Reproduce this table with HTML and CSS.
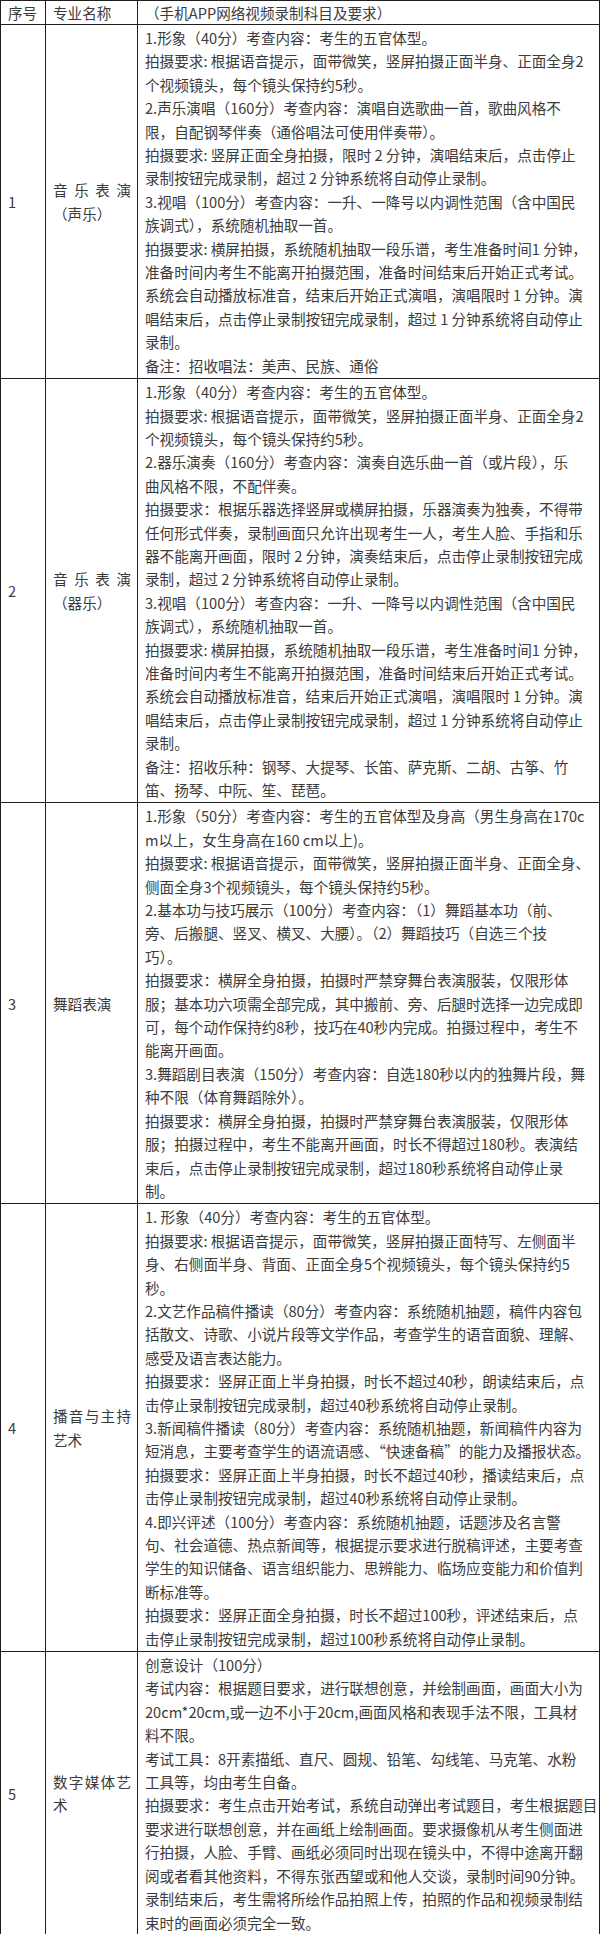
FILE: index.html
```html
<!DOCTYPE html>
<html lang="zh-CN">
<head>
<meta charset="utf-8">
<title>手机APP网络视频录制科目及要求</title>
<link rel="stylesheet" href="styles.css">
</head>
<body>
<table class="exam">
  <colgroup>
    <col class="c-no">
    <col class="c-major">
    <col class="c-req">
  </colgroup>
  <thead>
    <tr class="head">
      <th class="no">序号</th>
      <th class="major">专业名称</th>
      <th class="req">（手机APP网络视频录制科目及要求）</th>
    </tr>
  </thead>
  <tbody>
    <tr>
      <td class="no">1</td>
      <td class="major"><span class="jl">音乐表演</span>（声乐）</td>
      <td class="req"><div class="txt">1.形象（40分）考查内容：考生的五官体型。<br>拍摄要求: 根据语音提示，面带微笑，竖屏拍摄正面半身、正面全身2<br>个视频镜头，每个镜头保持约5秒。<br>2.声乐演唱（160分）考查内容：演唱自选歌曲一首，歌曲风格不<br>限，自配钢琴伴奏（通俗唱法可使用伴奏带）。<br>拍摄要求: 竖屏正面全身拍摄，限时 2 分钟，演唱结束后，点击停止<br>录制按钮完成录制，超过 2 分钟系统将自动停止录制。<br>3.视唱（100分）考查内容：一升、一降号以内调性范围（含中国民<br>族调式），系统随机抽取一首。<br>拍摄要求: 横屏拍摄，系统随机抽取一段乐谱，考生准备时间1 分钟，<br>准备时间内考生不能离开拍摄范围，准备时间结束后开始正式考试。<br>系统会自动播放标准音，结束后开始正式演唱，演唱限时 1 分钟。演<br>唱结束后，点击停止录制按钮完成录制，超过 1 分钟系统将自动停止<br>录制。<br>备注：招收唱法：美声、民族、通俗</div></td>
    </tr>
    <tr>
      <td class="no">2</td>
      <td class="major"><span class="jl">音乐表演</span>（器乐）</td>
      <td class="req"><div class="txt">1.形象（40分）考查内容：考生的五官体型。<br>拍摄要求: 根据语音提示，面带微笑，竖屏拍摄正面半身、正面全身2<br>个视频镜头，每个镜头保持约5秒。<br>2.器乐演奏（160分）考查内容：演奏自选乐曲一首（或片段），乐<br>曲风格不限，不配伴奏。<br>拍摄要求：根据乐器选择竖屏或横屏拍摄，乐器演奏为独奏，不得带<br>任何形式伴奏，录制画面只允许出现考生一人，考生人脸、手指和乐<br>器不能离开画面，限时 2 分钟，演奏结束后，点击停止录制按钮完成<br>录制，超过 2 分钟系统将自动停止录制。<br>3.视唱（100分）考查内容：一升、一降号以内调性范围（含中国民<br>族调式），系统随机抽取一首。<br>拍摄要求: 横屏拍摄，系统随机抽取一段乐谱，考生准备时间1 分钟，<br>准备时间内考生不能离开拍摄范围，准备时间结束后开始正式考试。<br>系统会自动播放标准音，结束后开始正式演唱，演唱限时 1 分钟。演<br>唱结束后，点击停止录制按钮完成录制，超过 1 分钟系统将自动停止<br>录制。<br>备注：招收乐种：钢琴、大提琴、长笛、萨克斯、二胡、古筝、竹<br>笛、扬琴、中阮、笙、琵琶。</div></td>
    </tr>
    <tr>
      <td class="no">3</td>
      <td class="major">舞蹈表演</td>
      <td class="req"><div class="txt">1.形象（50分）考查内容：考生的五官体型及身高（男生身高在170c<br>m以上，女生身高在160 cm以上)。<br>拍摄要求: 根据语音提示，面带微笑，竖屏拍摄正面半身、正面全身、<br>侧面全身3个视频镜头，每个镜头保持约5秒。<br>2.基本功与技巧展示（100分）考查内容：（1）舞蹈基本功（前、<br>旁、后搬腿、竖叉、横叉、大腰）。（2）舞蹈技巧（自选三个技<br>巧）。<br>拍摄要求：横屏全身拍摄，拍摄时严禁穿舞台表演服装，仅限形体<br>服；基本功六项需全部完成，其中搬前、旁、后腿时选择一边完成即<br>可，每个动作保持约8秒，技巧在40秒内完成。拍摄过程中，考生不<br>能离开画面。<br>3.舞蹈剧目表演（150分）考查内容：自选180秒以内的独舞片段，舞<br>种不限（体育舞蹈除外）。<br>拍摄要求：横屏全身拍摄，拍摄时严禁穿舞台表演服装，仅限形体<br>服；拍摄过程中，考生不能离开画面，时长不得超过180秒。表演结<br>束后，点击停止录制按钮完成录制，超过180秒系统将自动停止录<br>制。</div></td>
    </tr>
    <tr>
      <td class="no">4</td>
      <td class="major">播音与主持艺术</td>
      <td class="req"><div class="txt">1. 形象（40分）考查内容：考生的五官体型。<br>拍摄要求: 根据语音提示，面带微笑，竖屏拍摄正面特写、左侧面半<br>身、右侧面半身、背面、正面全身5个视频镜头，每个镜头保持约5<br>秒。<br>2.文艺作品稿件播读（80分）考查内容：系统随机抽题，稿件内容包<br>括散文、诗歌、小说片段等文学作品，考查学生的语音面貌、理解、<br>感受及语言表达能力。<br>拍摄要求：竖屏正面上半身拍摄，时长不超过40秒，朗读结束后，点<br>击停止录制按钮完成录制，超过40秒系统将自动停止录制。<br>3.新闻稿件播读（80分）考查内容：系统随机抽题，新闻稿件内容为<br>短消息，主要考查学生的语流语感、“快速备稿”的能力及播报状态。<br>拍摄要求：竖屏正面上半身拍摄，时长不超过40秒，播读结束后，点<br>击停止录制按钮完成录制，超过40秒系统将自动停止录制。<br>4.即兴评述（100分）考查内容：系统随机抽题，话题涉及名言警<br>句、社会道德、热点新闻等，根据提示要求进行脱稿评述，主要考查<br>学生的知识储备、语言组织能力、思辨能力、临场应变能力和价值判<br>断标准等。<br>拍摄要求：竖屏正面全身拍摄，时长不超过100秒，评述结束后，点<br>击停止录制按钮完成录制，超过100秒系统将自动停止录制。</div></td>
    </tr>
    <tr>
      <td class="no">5</td>
      <td class="major">数字媒体艺术</td>
      <td class="req"><div class="txt">创意设计（100分）<br>考试内容：根据题目要求，进行联想创意，并绘制画面，画面大小为<br>20cm*20cm,或一边不小于20cm,画面风格和表现手法不限，工具材<br>料不限。<br>考试工具：8开素描纸、直尺、圆规、铅笔、勾线笔、马克笔、水粉<br>工具等，均由考生自备。<br>拍摄要求：考生点击开始考试，系统自动弹出考试题目，考生根据题目<br>要求进行联想创意，并在画纸上绘制画面。要求摄像机从考生侧面进<br>行拍摄，人脸、手臂、画纸必须同时出现在镜头中，不得中途离开翻<br>阅或者看其他资料，不得东张西望或和他人交谈，录制时间90分钟。<br>录制结束后，考生需将所绘作品拍照上传，拍照的作品和视频录制结<br>束时的画面必须完全一致。</div></td>
    </tr>
  </tbody>
</table>
</body>
</html>
```

FILE: styles.css
```css
html, body {
  margin: 0;
  padding: 0;
  background: #ffffff;
}

body {
  font-family: "Noto Sans CJK SC", "Noto Sans", sans-serif;
  font-size: 14.6px;
  color: #3b3b3b;
}

.exam {
  width: 600px;
  border-collapse: collapse;
  table-layout: fixed;
}

.c-no { width: 45px; }
.c-major { width: 92px; }

.exam th,
.exam td {
  border: 1px solid #1e1e1e;
  padding: 1px 0 1px 7px;
  line-height: 23.4px;
  vertical-align: middle;
  text-align: left;
  font-weight: normal;
}

.exam .head th {
  padding-top: 0;
  padding-bottom: 0;
  line-height: 23px;
  white-space: nowrap;
}

.exam td.major {
  padding-right: 6px;
  text-align: justify;
}

.jl {
  display: block;
  text-align: justify;
  text-align-last: justify;
}

.txt {
  white-space: nowrap;
}
```
